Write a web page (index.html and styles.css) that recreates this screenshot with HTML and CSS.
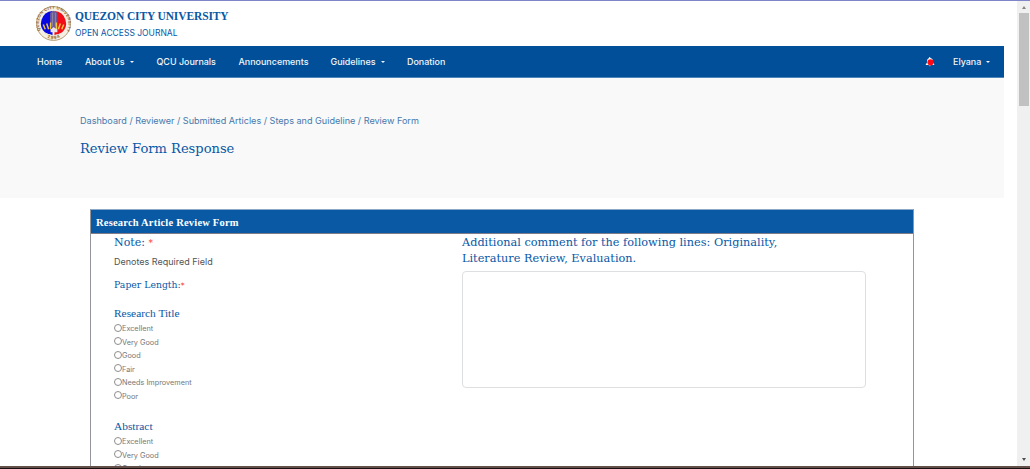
FILE: index.html
```html
<!DOCTYPE html>
<html lang="en">
<head>
<meta charset="utf-8">
<title>Review Form Response</title>
<link rel="stylesheet" href="styles.css">
</head>
<body>
<div class="window">
  <div class="page">
    <header class="brand">
      <svg class="seal" viewBox="0 0 36 36" aria-hidden="true">
        <defs><path id="ring" d="M4.6 25A15.1 15.1 0 1 1 31.4 25"/><path id="base" d="M8 30.2Q18 38.2 28 30.2"/></defs>
        <circle cx="18" cy="18" r="17.400" fill="#f5efe4" stroke="#b69a72" stroke-width="1"/>
        <text class="seal-text"><textPath href="#ring" textLength="62">QUEZON CITY UNIVERSITY</textPath></text>
        <path d="M17 5.200A12.800 12.800 0 0 0 10 28L17 30z" fill="#0908e0"/>
        <path d="M19 5.200A12.800 12.800 0 0 1 26 28L19 30z" fill="#f20d18"/>
        <path d="M14.500 7l3.500-2 4 2v15h-7.500z" fill="#685c96"/>
        <path d="M17 7v14M20 7v14" stroke="#a293ad" stroke-width=".7"/>
        <path d="M7.500 19l2 5M11 18l2 6M15 17v7M21 17v7M25 18l-2 6M28.500 19l-2 5" stroke="#efc642" stroke-width="1.500" fill="none"/>
        <path d="M15 24l3-2 4 2v3h-7z" fill="#eee3e6"/>
        <path d="M9 27q9 6 18 0l-3 5H12z" fill="#eee6dc"/>
        <text class="seal-year"><textPath href="#base" startOffset="4" textLength="14">1994</textPath></text>
      </svg>
      <div class="brand-text">
        <div class="brand-name">QUEZON CITY UNIVERSITY</div>
        <div class="brand-sub">OPEN ACCESS JOURNAL</div>
      </div>
    </header>
    <nav class="nav">
      <a class="home">Home</a>
      <a class="about">About Us<i class="caret"></i></a>
      <a class="journals">QCU Journals</a>
      <a class="news">Announcements</a>
      <a class="guide">Guidelines<i class="caret"></i></a>
      <a class="donate">Donation</a>
      <svg class="bell" viewBox="0 0 10 12" aria-hidden="true"><path d="M4.200 1h1v1C8 2.500 8 4.500 8 6.500L9.500 9H.5L2 6.500c0-2 0-4 2.200-4.500zM3.500 9.500h2.500q-1 1.500-2.500 0" fill="#fff"/><circle cx="5.500" cy="6.300" r="3.100" fill="#ff0a12"/></svg>
      <a class="user">Elyana<i class="caret"></i></a>
    </nav>
    <section class="hero">
      <div class="crumbs">Dashboard / Reviewer / Submitted Articles / Steps and Guideline / Review Form</div>
      <h1>Review Form Response</h1>
    </section>
    <main class="card">
      <h2>Research Article Review Form</h2>
      <div class="columns">
        <div class="form">
          <div class="note">Note: <b>*</b></div>
          <div class="required">Denotes Required Field</div>
          <div class="paper">Paper Length:<b>*</b></div>
          <h3>Research Title</h3>
          <div class="options">
            <label><input type="radio" name="title">Excellent</label>
            <label><input type="radio" name="title">Very Good</label>
            <label><input type="radio" name="title">Good</label>
            <label><input type="radio" name="title">Fair</label>
            <label><input type="radio" name="title">Needs Improvement</label>
            <label><input type="radio" name="title">Poor</label>
          </div>
          <h3>Abstract</h3>
          <div class="options">
            <label><input type="radio" name="abstract">Excellent</label>
            <label><input type="radio" name="abstract">Very Good</label>
            <label><input type="radio" name="abstract">Good</label>
          </div>
        </div>
        <div class="comment">
          <div class="prompt">Additional comment for the following lines: Originality,<br>Literature Review, Evaluation.</div>
          <textarea aria-label="Additional comment"></textarea>
        </div>
      </div>
    </main>
  </div>
  <div class="scrollbar"><i class="up"></i><i class="thumb"></i><i class="down"></i></div>
</div>
<footer class="taskbar"></footer>
</body>
</html>
```
FILE: styles.css
```css
* { box-sizing: border-box; }
body { margin: 0; width: 1030px; height: 469px; overflow: hidden; background: #fff; font-family: Inter, sans-serif; color: #0858a5; display: flex; flex-direction: column; }
.window { height: 466px; border-top: 1px solid #7f85c7; display: flex; overflow: hidden; }
.page { flex: 1; height: 465px; overflow: hidden; }
.brand { height: 45px; display: flex; padding: 5px 0 0 36px; }
.seal { width: 35px; height: 35px; flex: none; }
.seal-text { font: bold 4.300px "Liberation Sans", sans-serif; fill: #8c6538; }
.seal-year { font: bold 5px "Liberation Sans", sans-serif; fill: #94642a; }
.brand-text { padding-left: 4px; white-space: nowrap; }
.brand-name { font: bold 11.500px/15px "Liberation Serif", serif; letter-spacing: -.12px; padding-top: 3px; }
.brand-sub { font-size: 8.500px; line-height: 12px; padding-top: 3px; }
.nav { height: 32px; width: 1004px; background: #004f98; border-bottom: 1px solid #4e86b9; display: flex; align-items: center; padding-left: 37px; color: #f2f5fa; font-size: 8.950px; font-weight: 500; white-space: nowrap; }
.nav a { flex: none; }
.home { width: 48px; }
.about { width: 71.500px; }
.journals { width: 82px; }
.news { width: 92px; }
.guide { width: 76.500px; }
.donate { width: 518px; }
.bell { width: 10px; height: 12px; flex: none; }
.user { padding-left: 18px; }
.caret { display: inline-block; border: 2px solid transparent; border-top-color: currentColor; border-bottom: 0; margin-left: 5px; vertical-align: 2px; }
.hero { width: 1004px; height: 120px; background: #f9f9f9; padding: 36px 0 0 80px; white-space: nowrap; }
.crumbs { font-size: 9.080px; line-height: 13px; color: #477aad; }
h1, .note, .paper, .prompt { font-family: "DejaVu Serif", serif; font-weight: normal; }
h1 { margin: 12px 0 0; font-size: 13.050px; line-height: 20px; }
.card { margin: 11px 0 0 90px; width: 824px; height: 280px; border: 1px solid #929599; border-top-color: #8caac7; }
h2 { margin: 0; height: 24px; padding-left: 5px; background: #0959a4; border-bottom: 1px solid #817c8a; color: #fff; font: bold 10.500px/25px "Liberation Serif", serif; letter-spacing: .2px; }
.columns { display: flex; padding-left: 23px; }
.form { width: 348px; }
.note { font-size: 11px; line-height: 16px; padding-top: 1px; }
b { color: #f33; font-weight: normal; font-size: .8em; }
.required { margin-top: 5px; font-size: 9px; line-height: 12px; color: #505356; }
.paper { margin-top: 9px; font-size: 9.300px; line-height: 16px; }
h3 { margin: 11px 0 0; font: 11.400px/16px "Liberation Serif", serif; }
.options { margin-top: 1px; height: 85px; }
.options label { display: flex; height: 13.500px; align-items: center; font-size: 7.300px; color: #777; }
.options input { appearance: none; width: 8px; height: 8px; margin: 0; border: 1px solid #8e8e8e; border-radius: 50%; position: relative; top: -1px; }
.prompt { font-size: 11.300px; line-height: 16px; white-space: nowrap; padding-top: 1px; }
textarea { display: block; width: 404px; height: 117px; margin-top: 4px; resize: none; border: 1px solid #dedfe1; border-radius: 4px; background: #fff; }
.scrollbar { width: 13px; background: #f0f0f0; display: flex; flex-direction: column; align-items: center; }
.up { margin-top: 5px; border: 2.500px solid transparent; border-top: 0; border-bottom: 3px solid #858585; }
.thumb { margin-top: 4px; width: 10px; height: 93px; background: #c1c1c1; }
.down { margin-top: auto; margin-bottom: 5px; border: 2.500px solid transparent; border-bottom: 0; border-top: 3px solid #505050; }
.taskbar { height: 3px; background: #180f0f; border-top: 2px solid #63504a; }
```
